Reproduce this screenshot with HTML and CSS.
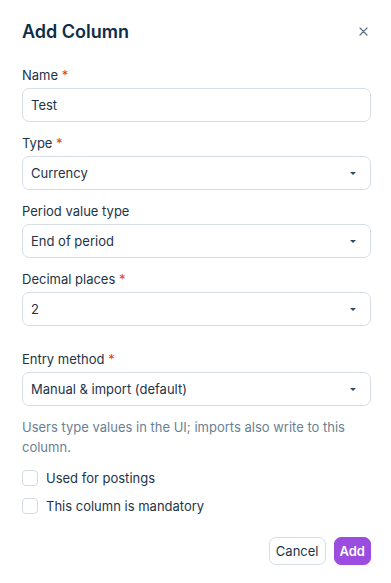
FILE: index.html
```html
<!DOCTYPE html>
<html lang="en">
<head>
    <meta charset="UTF-8">
    <meta name="viewport" content="width=device-width, initial-scale=1.0">
    <title>Add Column</title>
    <link rel="stylesheet" href="styles.css">
</head>
<body>

<div class="dialog">
    <div class="dialog-header">
        <h2 class="dialog-title">Add Column</h2>
        <button class="close-btn" aria-label="Close">
            <svg width="9" height="9" viewBox="0 0 9 9"><path d="M1 1L8 8M8 1L1 8" stroke="#5b7189" stroke-width="1.2" stroke-linecap="round"/></svg>
        </button>
    </div>

    <div class="field">
        <label class="label">Name <span class="req">*</span></label>
        <div class="input">Test</div>
    </div>

    <div class="field">
        <label class="label">Type <span class="req">*</span></label>
        <div class="input select">Currency<span class="caret"></span></div>
    </div>

    <div class="field">
        <label class="label">Period value type</label>
        <div class="input select">End of period<span class="caret"></span></div>
    </div>

    <div class="field">
        <label class="label">Decimal places <span class="req">*</span></label>
        <div class="input select">2<span class="caret"></span></div>
    </div>

    <div class="field field-spaced">
        <label class="label">Entry method <span class="req">*</span></label>
        <div class="input select">Manual &amp; import (default)<span class="caret"></span></div>
        <p class="help">Users type values in the UI; imports also write to this column.</p>
    </div>

    <label class="check"><span class="box"></span>Used for postings</label>
    <label class="check"><span class="box"></span>This column is mandatory</label>

    <div class="actions">
        <button class="btn btn-cancel">Cancel</button>
        <button class="btn btn-add">Add</button>
    </div>
</div>

</body>
</html>
```

FILE: styles.css
```css
body {
    margin: 0;
    background-color: #fff;
    font-family: Inter, "Noto Sans", sans-serif;
    color: #1d3448;
}
.dialog {
    padding: 19px 20px 18px 22px;
}
.dialog-header {
    display: flex;
    justify-content: space-between;
    align-items: center;
    height: 24px;
    margin-bottom: 22px;
}
.dialog-title {
    margin: 0;
    font-size: 18px;
    font-weight: 600;
    color: #0e2d48;
}
.close-btn {
    border: none;
    background: none;
    padding: 0;
    margin-right: 3px;
    display: flex;
    cursor: pointer;
}
.field {
    margin-bottom: 11px;
}
.field-spaced {
    margin-top: 23px;
}
.label {
    display: block;
    font-size: 13px;
    line-height: 20px;
    margin-bottom: 3px;
    color: #1d3448;
}
.req {
    color: #e0421c;
}
.input {
    box-sizing: border-box;
    height: 34px;
    border: 1px solid #d8dee6;
    border-radius: 7px;
    padding: 0 8px;
    display: flex;
    align-items: center;
    font-size: 13px;
    color: #1d3448;
}
.select {
    justify-content: space-between;
    padding-right: 14px;
}
.caret {
    width: 0;
    height: 0;
    border-left: 3px solid transparent;
    border-right: 3px solid transparent;
    border-top: 3px solid #2b4a66;
}
.help {
    margin: 11px 0 0;
    font-size: 13px;
    line-height: 20px;
    color: #6a7f93;
}
.check {
    display: flex;
    align-items: center;
    gap: 8px;
    font-size: 13px;
    line-height: 20px;
    margin-bottom: 8px;
    color: #1d3448;
}
.check:first-of-type {
    margin-top: 10px;
}
.box {
    box-sizing: border-box;
    width: 16px;
    height: 16px;
    border: 1px solid #d3dae3;
    border-radius: 4px;
}
.actions {
    display: flex;
    justify-content: flex-end;
    gap: 8px;
    margin-top: 21px;
}
.btn {
    font-family: inherit;
    font-size: 13px;
    height: 28px;
    padding: 0 6px;
    border-radius: 7px;
    cursor: pointer;
}
.btn-cancel {
    background-color: #fff;
    border: 1px solid #d8dee6;
    color: #1d3448;
}
.btn-add {
    padding: 0 5px;
    background-color: #9b4ddf;
    border: 1px solid #9b4ddf;
    color: #fff;
    font-weight: 600;
}
```
